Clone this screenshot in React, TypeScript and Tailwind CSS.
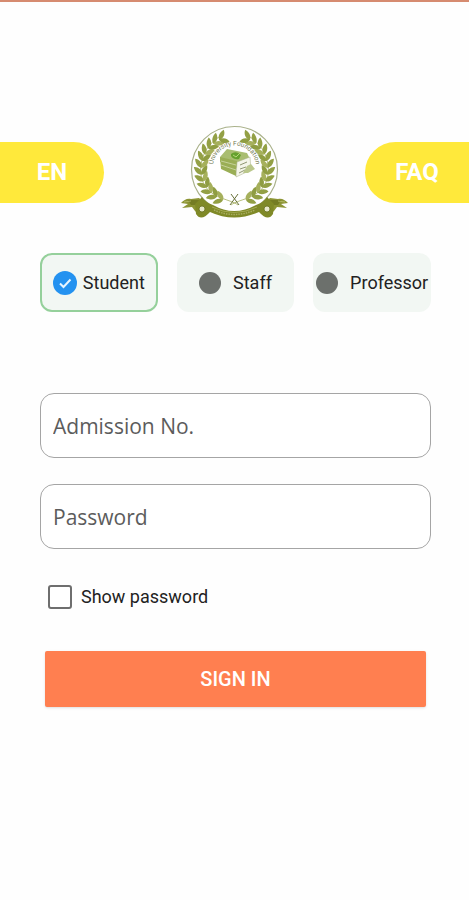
import { useState } from "react";

const ROLES = ["Student", "Staff", "Professor"] as const;
type Role = (typeof ROLES)[number];

const LEAF_ANGLES = [112, 124, 136, 148, 160, 172, 184, 196, 208, 220, 232, 244];

function WreathHalf() {
  return (
    <g>
      <path d="M67 90 C58 83 34 84 30 60 C28 44 36 28 50 21" fill="none" stroke="#a3ad5e" strokeWidth="0.8" />
      {LEAF_ANGLES.map((angle, i) => {
        const rad = (angle * Math.PI) / 180;
        const x = 63.5 + 33 * Math.cos(rad);
        const y = 54 + 33 * Math.sin(rad);
        const inner = i % 2 ? "#8f9d42" : "#a6b05c";
        return (
          <g key={angle} transform={`translate(${x} ${y}) rotate(${angle + 90})`}>
            <path d="M-1 0.4 C-1 -4 3 -6.5 7.5 -7 C7.500 -3 4 0.8 -1 0.4Z" fill="#93a045" />
            <path d="M-1 -0.4 C-1 4 3 6.500 7.5 6.500 C7.500 3 4 -0.8 -1 -0.4Z" fill={inner} />
          </g>
        );
      })}
    </g>
  );
}

function RibbonTail() {
  return (
    <g>
      <path
        d="M10 88 C13 85 16 83 20 84 L28 83 L34 88 L36 97 L30 101 L24 96 L21 92 L11 93 L17 89Z"
        fill="#8c9434"
      />
      <path d="M17 85 L28 85 L32 90 L20 90Z" fill="#747c24" />
      <path d="M13 87 L20 86" stroke="#b7bc6c" strokeWidth="0.8" />
    </g>
  );
}

function Crest() {
  return (
    <svg viewBox="10 10 108 94" className="h-[94px] w-[108px]" role="img" aria-label="Foundation crest">
      <defs>
        <path id="crest-arc" d="M44.500 62 A21.500 21.500 0 1 1 82.500 62" />
      </defs>
      <circle cx="63.5" cy="54.5" r="43" fill="#fff" stroke="#a9b18a" strokeWidth="1.2" />
      <WreathHalf />
      <g transform="translate(127 0) scale(-1 1)">
        <WreathHalf />
      </g>
      <text fill="#737a52" fontSize="6.5" fontFamily="Roboto, sans-serif">
        <textPath href="#crest-arc" startOffset="50%" textAnchor="middle">
          University Foundation
        </textPath>
      </text>

      <path d="M49 42 L56 34 L76 38 L79 44 L66 53 L49 47Z" fill="#a9bd70" />
      <path d="M49 42 L66 46 L65 61 L50 54Z" fill="#9aae55" />
      <path d="M50 46 L65 50 M50 50 L65 55" stroke="#c9d5a0" strokeWidth="0.9" />
      <path d="M66 47 L79 42 L80 55 L65 62Z" fill="#f4f5e9" stroke="#a5ac84" strokeWidth="0.5" />
      <path d="M69 50 L76 47 M69 54 L75 52 M68 58 L74 55" stroke="#858c65" strokeWidth="0.9" />
      <path d="M76 51 L80 49 L84 54 L77 58 L72 58Z" fill="#bac78b" />
      <path d="M60 39 Q65 35 70 40 L68 44 Q63 45 60 41Z" fill="#66a12d" />
      <path d="M62 40 L65 42 L69 38" fill="none" stroke="#b4d777" strokeWidth="1" />

      <RibbonTail />
      <g transform="translate(127 0) scale(-1 1)">
        <RibbonTail />
      </g>
      <path
        d="M31 82 Q34 87 42 90 Q63 102 85 90 Q93 87 96 82 L103 89 L102 99 Q97 107 88 97 Q63 108 39 97 Q30 107 25 99 L24 89Z"
        fill="#7f8927"
      />
      <path d="M41 92 Q63 103 86 92" fill="none" stroke="#adb35f" strokeWidth="0.8" />
      <path d="M43 95 Q63 104 84 95" fill="none" stroke="#a9ae62" strokeWidth="1.4" strokeDasharray="1.5 1" />
      <circle cx="31" cy="94" r="3" fill="#e8e9cb" stroke="#656d1b" strokeWidth="0.8" />
      <circle cx="96" cy="94" r="3" fill="#e8e9cb" stroke="#656d1b" strokeWidth="0.8" />
      <path d="M59 90 L67 79 M68 90 L60 79" stroke="#677039" strokeWidth="1" />
    </svg>
  );
}

type RoleOptionProps = { role: Role; selected: boolean; onSelect: (role: Role) => void };

function RoleOption({ role, selected, onSelect }: RoleOptionProps) {
  return (
    <label
      className={`flex h-[59px] min-w-0 items-center justify-center rounded-xl border-2 bg-[#f2f7f3] text-lg whitespace-nowrap text-[#222] ${
        selected ? "gap-[6px] border-[#95d09b]" : "gap-3 border-transparent"
      }`}
    >
      <span className="grid shrink-0 place-items-center">
        <input
          type="radio"
          name="role"
          value={role}
          checked={selected}
          onChange={() => onSelect(role)}
          className="col-start-1 row-start-1 size-[22px] appearance-none rounded-full bg-[#6c706c] checked:size-6 checked:bg-[#2492f0]"
        />
        {selected && (
          <svg viewBox="0 0 24 24" className="pointer-events-none col-start-1 row-start-1 size-6" aria-hidden="true">
            <path d="M7 12.5 L10.5 16 L17.5 8.5" fill="none" stroke="#e8f5ff" strokeWidth="2" />
          </svg>
        )}
      </span>
      {role}
    </label>
  );
}

const fieldClass =
  "h-[65px] w-full rounded-[14px] border border-[#a5a5a5] bg-white px-3 font-['Open_Sans',sans-serif] text-[21px] text-[#444] outline-none placeholder:text-[#5c5c5c] placeholder:opacity-100";

const pillClass = "h-[61px] w-[104px] bg-[#ffe93b] text-2xl font-bold text-white";

export default function App() {
  const [role, setRole] = useState<Role>("Student");
  const [showPassword, setShowPassword] = useState(false);

  return (
    <main className="min-h-screen border-t-2 border-[#d68b70] bg-[#fefefe] font-[Roboto,sans-serif]">
      <header className="flex items-center justify-between pt-[123px]">
        <button type="button" className={`${pillClass} rounded-r-full`}>
          EN
        </button>
        <Crest />
        <button type="button" className={`${pillClass} rounded-l-full`}>
          FAQ
        </button>
      </header>

      <form className="pt-[34px] pr-[38px] pl-10" onSubmit={(event) => event.preventDefault()}>
        <div role="radiogroup" aria-label="Role" className="grid grid-cols-3 gap-[19px]">
          {ROLES.map((item) => (
            <RoleOption key={item} role={item} selected={item === role} onSelect={setRole} />
          ))}
        </div>

        <div className="mt-[81px] flex flex-col gap-[26px]">
          <input type="text" aria-label="Admission No." placeholder="Admission No." className={fieldClass} />
          <input
            type={showPassword ? "text" : "password"}
            aria-label="Password"
            placeholder="Password"
            className={fieldClass}
          />
        </div>

        <label className="mt-[34px] ml-2 flex w-fit items-center gap-[9px] text-lg text-[#222]">
          <input
            type="checkbox"
            checked={showPassword}
            onChange={(event) => setShowPassword(event.target.checked)}
            className="size-6 appearance-none rounded-[3px] border-2 border-[#6e6e6e] bg-white checked:bg-[#6e6e6e]"
          />
          Show password
        </label>

        <div className="mt-10 px-[5px]">
          <button
            type="submit"
            className="h-14 w-full rounded-xs bg-[#ff7f50] text-xl font-medium text-white shadow-sm"
          >
            SIGN IN
          </button>
        </div>
      </form>
    </main>
  );
}
